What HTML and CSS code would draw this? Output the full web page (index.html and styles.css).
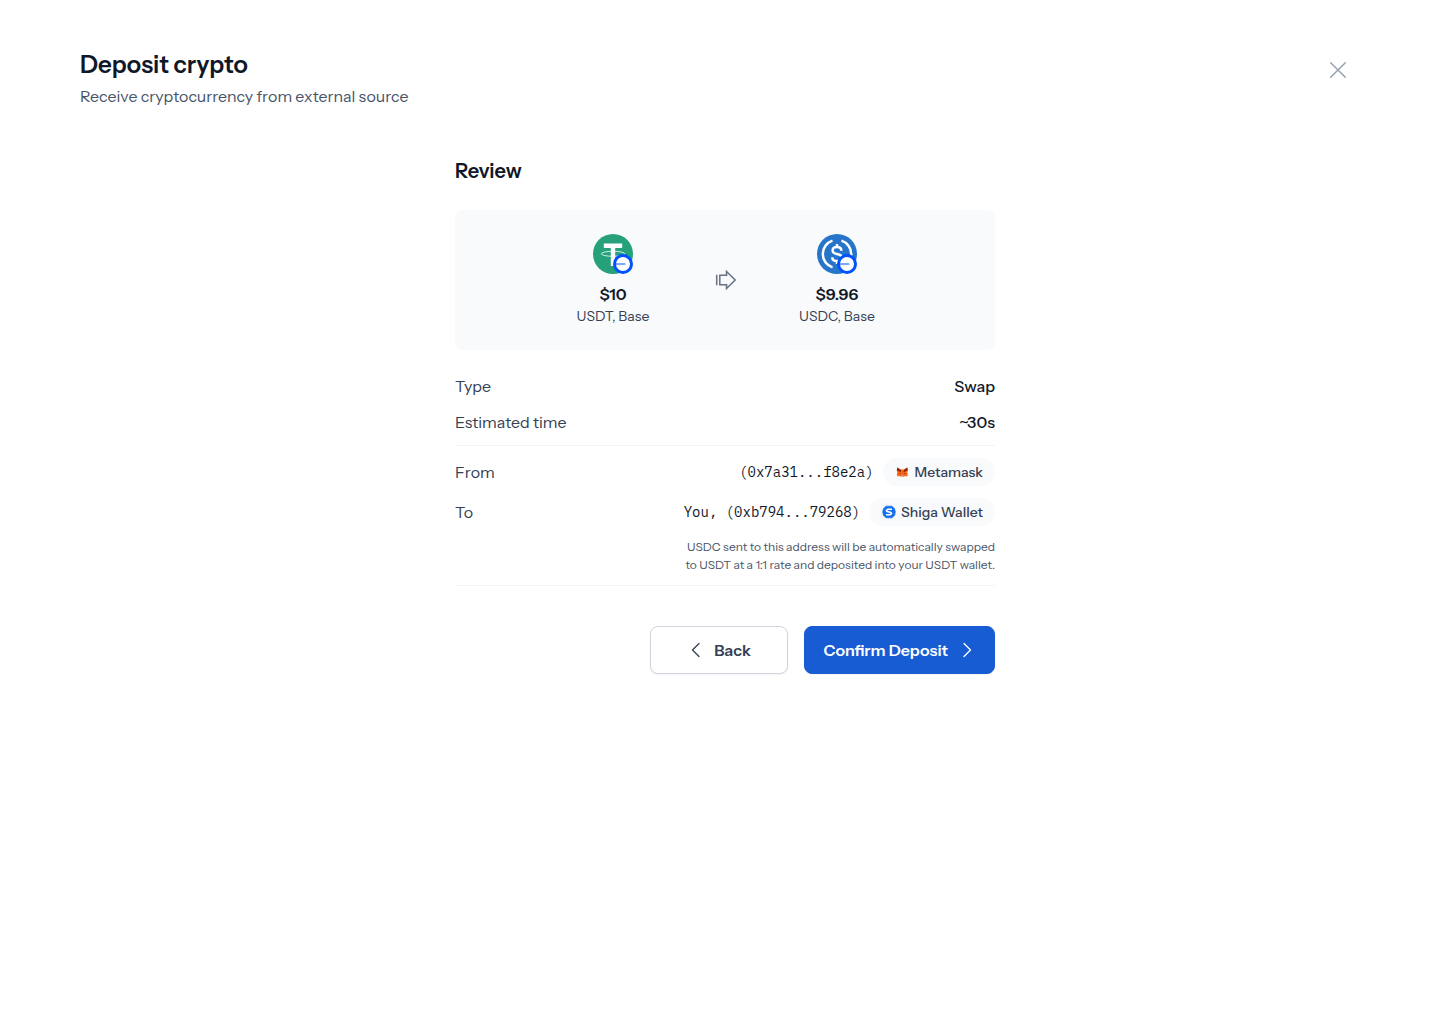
FILE: index.html
```html
<!DOCTYPE html>
<html lang="en">
<head>
    <meta charset="UTF-8">
    <meta name="viewport" content="width=device-width, initial-scale=1.0">
    <title>Deposit crypto</title>
    <link rel="stylesheet" href="styles.css">
</head>
<body>
    <header class="page-header">
        <div>
            <h1 class="page-title">Deposit crypto</h1>
            <p class="page-subtitle">Receive cryptocurrency from external source</p>
        </div>
        <button class="close-button" type="button" aria-label="Close">
            <svg width="24" height="24" viewBox="0 0 24 24" fill="none" stroke="currentColor" stroke-width="1.5" stroke-linecap="round">
                <path d="M4.7 4.7l14.6 14.6M19.3 4.7L4.7 19.3"/>
            </svg>
        </button>
    </header>

    <main class="review">
        <h2 class="review-title">Review</h2>

        <section class="swap">
            <div class="coin">
                <div class="coin-icon">
                    <svg width="40" height="40" viewBox="0 0 40 40">
                        <circle cx="20" cy="20" r="20" fill="#26a17b"/>
                        <path d="M10.8 9.5h18.4v4.4h-7V32h-4.4V13.9h-7z" fill="#fff"/>
                        <ellipse cx="20" cy="19.8" rx="11.7" ry="2.5" fill="none" stroke="#fff" stroke-width="0.8"/>
                    </svg>
                    <svg class="network-badge" width="20" height="20" viewBox="0 0 20 20">
                        <circle cx="10" cy="10" r="8.5" fill="#fff" stroke="#0052ff" stroke-width="3"/>
                        <path d="M3 10h9.3" stroke="#5b92ff" stroke-width="1.6"/>
                    </svg>
                </div>
                <strong class="coin-amount">$10</strong>
                <span class="coin-name">USDT, Base</span>
            </div>

            <svg class="swap-arrow" width="22" height="22" viewBox="0 0 22 22" fill="none" stroke="currentColor" stroke-width="1.5">
                <path d="M2.7 5.8v10.4M5.8 6.3h6.7V2.5l8.7 8.5-8.7 8.5v-3.8H5.8z"/>
            </svg>

            <div class="coin">
                <div class="coin-icon">
                    <svg width="40" height="40" viewBox="0 0 40 40">
                        <circle cx="20" cy="20" r="20" fill="#2775ca"/>
                        <g fill="none" stroke="#fff" stroke-width="2.5">
                            <path d="M15.5 6.6a14.1 14.1 0 0 0 0 26.8M24.5 6.6a14.1 14.1 0 0 1 0 26.8"/>
                            <path d="M24.4 16.8c0-2.4-1.7-3.8-4.4-3.8s-4.4 1.3-4.4 3.5c0 2.3 1.7 3 4.4 3.5 2.9.5 4.7 1.2 4.7 3.5 0 2.3-1.9 3.6-4.7 3.6s-4.7-1.4-4.7-3.9M20 10v3M20 27v3"/>
                        </g>
                    </svg>
                    <svg class="network-badge" width="20" height="20" viewBox="0 0 20 20">
                        <circle cx="10" cy="10" r="8.5" fill="#fff" stroke="#0052ff" stroke-width="3"/>
                        <path d="M3 10h9.3" stroke="#5b92ff" stroke-width="1.6"/>
                    </svg>
                </div>
                <strong class="coin-amount">$9.96</strong>
                <span class="coin-name">USDC, Base</span>
            </div>
        </section>

        <dl class="details">
            <div class="row">
                <dt>Type</dt>
                <dd>Swap</dd>
            </div>
            <div class="row">
                <dt>Estimated time</dt>
                <dd>~30s</dd>
            </div>
        </dl>

        <dl class="details">
            <div class="row">
                <dt>From</dt>
                <dd>
                    <span class="address">(0x7a31...f8e2a)</span>
                    <span class="chip">
                        <svg width="14" height="14" viewBox="0 0 14 14">
                            <path d="M1.3 2.5L5 4.6h2.7l3.6-2.1.5 3-.6 2 .6 1.7-.7 2.4-2.3-.5-1.1.8H5l-1.2-.8-2.3.5-.7-2.4.6-1.7-.6-2z" fill="#f9651b"/>
                            <path d="M1.3 2.5l3.4 2.4.4 2.3L.8 5.5zM11.3 2.5L7.9 4.9l-.4 2.3 4.3-1.7z" fill="#8f2a0c"/>
                            <path d="M3.4 7.9l1.5.8-1.4.3zM9.2 7.9l-1.5.8 1.4.3z" fill="#3a1f1a"/>
                            <path d="M5.3 10.4h2l.2 1.5H5.1z" fill="#d5bfb2"/>
                        </svg>
                        Metamask
                    </span>
                </dd>
            </div>
            <div class="row">
                <dt>To</dt>
                <dd>
                    <span class="address">You, (0xb794...79268)</span>
                    <span class="chip">
                        <svg width="14" height="14" viewBox="0 0 14 14">
                            <path d="M4 1.2h6l2.5 2.5.8 3.3-.8 3.3-2.5 2.5H4l-2.5-2.5L.7 7l.8-3.3z" fill="#1570ef" stroke="#1570ef" stroke-linejoin="round" stroke-width="0.8"/>
                            <path d="M10 4.3H5.8L4.3 5.5l.9 1 3.7 1 .6 1.1-1.3 1.1H4" fill="none" stroke="#fff" stroke-width="1.6" stroke-linejoin="round"/>
                        </svg>
                        Shiga Wallet
                    </span>
                </dd>
            </div>
            <div class="note">
                USDC sent to this address will be automatically swapped<br>
                to USDT at a 1:1 rate and deposited into your USDT wallet.
            </div>
        </dl>

        <div class="actions">
            <button class="button button-back" type="button">
                <svg width="20" height="20" viewBox="0 0 20 20" fill="none" stroke="currentColor" stroke-width="1.3" stroke-linecap="round" stroke-linejoin="round">
                    <path d="M13 3.5L6.5 10l6.5 6.5"/>
                </svg>
                Back
            </button>
            <button class="button button-confirm" type="button">
                Confirm Deposit
                <svg width="20" height="20" viewBox="0 0 20 20" fill="none" stroke="currentColor" stroke-width="1.3" stroke-linecap="round" stroke-linejoin="round">
                    <path d="M8 3.5l6.5 6.5L8 16.5"/>
                </svg>
            </button>
        </div>
    </main>
</body>
</html>
```
FILE: styles.css
```css
* {
    box-sizing: border-box;
}
body {
    margin: 0;
    padding: 48px 70px 48px 80px;
    background-color: #fff;
    color: #101828;
    font-family: "Instrument Sans", Inter, sans-serif;
    font-size: 16px;
    line-height: 24px;
}
h1, h2, p, dl, dd {
    margin: 0;
}
svg {
    display: block;
    flex-shrink: 0;
}
.page-header {
    display: flex;
    justify-content: space-between;
    align-items: flex-start;
}
.page-title {
    font-size: 24px;
    font-weight: 600;
    line-height: 34px;
}
.page-subtitle {
    margin-top: 2px;
    color: #475467;
}
.close-button {
    padding: 10px 20px;
    border: 0;
    background: none;
    color: #98a2b3;
    cursor: pointer;
}
.review {
    max-width: 540px;
    margin: 48px auto 0;
}
.review-title {
    font-size: 20px;
    font-weight: 600;
    line-height: 30px;
}
.swap {
    display: flex;
    justify-content: center;
    align-items: center;
    gap: 59px;
    margin: 24px 0;
    padding: 24px;
    border-radius: 8px;
    background-color: #f9fafb;
}
.swap-arrow {
    color: #667085;
}
.coin {
    display: flex;
    flex-direction: column;
    align-items: center;
    width: 84px;
    white-space: nowrap;
}
.coin-icon {
    position: relative;
    margin-bottom: 8px;
}
.network-badge {
    position: absolute;
    right: 0;
    bottom: 0;
}
.coin-amount {
    font-weight: 600;
}
.coin-name {
    color: #344054;
    font-size: 14px;
    line-height: 20px;
}
.details {
    display: flex;
    flex-direction: column;
    gap: 12px;
    margin-bottom: 12px;
    padding-bottom: 11px;
    border-bottom: 1px solid #f2f4f7;
}
.row {
    display: flex;
    justify-content: space-between;
    align-items: center;
}
.row dt {
    color: #344054;
}
.row dd {
    display: flex;
    align-items: center;
    gap: 9px;
    font-weight: 500;
}
.address {
    font-family: "IBM Plex Mono", "Liberation Mono", monospace;
    font-size: 14px;
    font-weight: 400;
}
.chip {
    display: flex;
    align-items: center;
    gap: 5px;
    padding: 4px 12px 4px 13px;
    border-radius: 14px;
    background-color: #f9fafb;
    color: #344054;
    font-size: 14px;
    line-height: 20px;
}
.note {
    color: #475467;
    font-size: 12px;
    line-height: 18px;
    text-align: right;
}
.actions {
    display: flex;
    justify-content: flex-end;
    gap: 16px;
    margin-top: 40px;
}
.button {
    display: flex;
    justify-content: center;
    align-items: center;
    gap: 8px;
    min-width: 138px;
    padding: 11px 19px;
    border: 1px solid #d0d5dd;
    border-radius: 8px;
    box-shadow: 0 1px 2px rgba(16, 24, 40, 0.05);
    font-family: inherit;
    font-size: 16px;
    font-weight: 600;
    line-height: 24px;
    cursor: pointer;
}
.button-back {
    background-color: #fff;
    color: #344054;
}
.button-confirm {
    padding-right: 18px;
    border-color: #175cd3;
    background-color: #175cd3;
    color: #fff;
}
```
